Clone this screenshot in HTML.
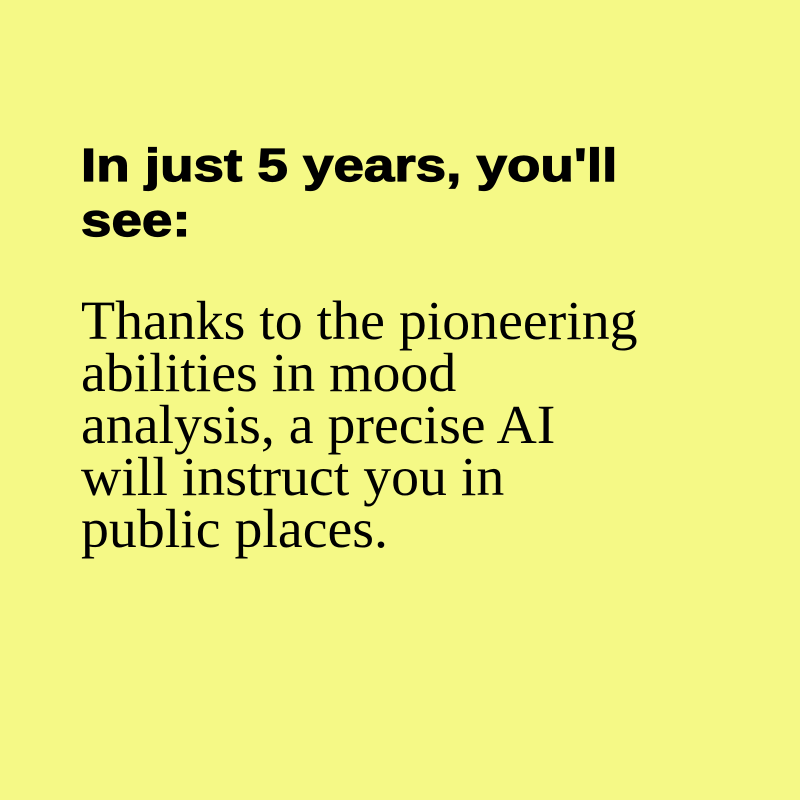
<!DOCTYPE html>
<html><head><style>
html,body{margin:0;padding:0;width:800px;height:800px;background:#f5f986;overflow:hidden}
h1{position:absolute;left:81px;top:138px;margin:0;font:bold 46px/55px "Liberation Sans",sans-serif;color:#000;width:600px;transform:scaleX(1.19);transform-origin:0 0;-webkit-text-stroke:1.2px #000;white-space:nowrap}
p{position:absolute;left:81px;top:295px;margin:0;font:55px/52px "Liberation Serif",serif;color:#000;width:700px;white-space:nowrap;transform:scaleX(1.015);transform-origin:0 0}
</style></head><body>
<h1>In just 5 years, you'll<br>see:</h1>
<p>Thanks to the pioneering<br>abilities in mood<br>analysis, a precise AI<br>will instruct you in<br>public places.</p>
</body></html>
